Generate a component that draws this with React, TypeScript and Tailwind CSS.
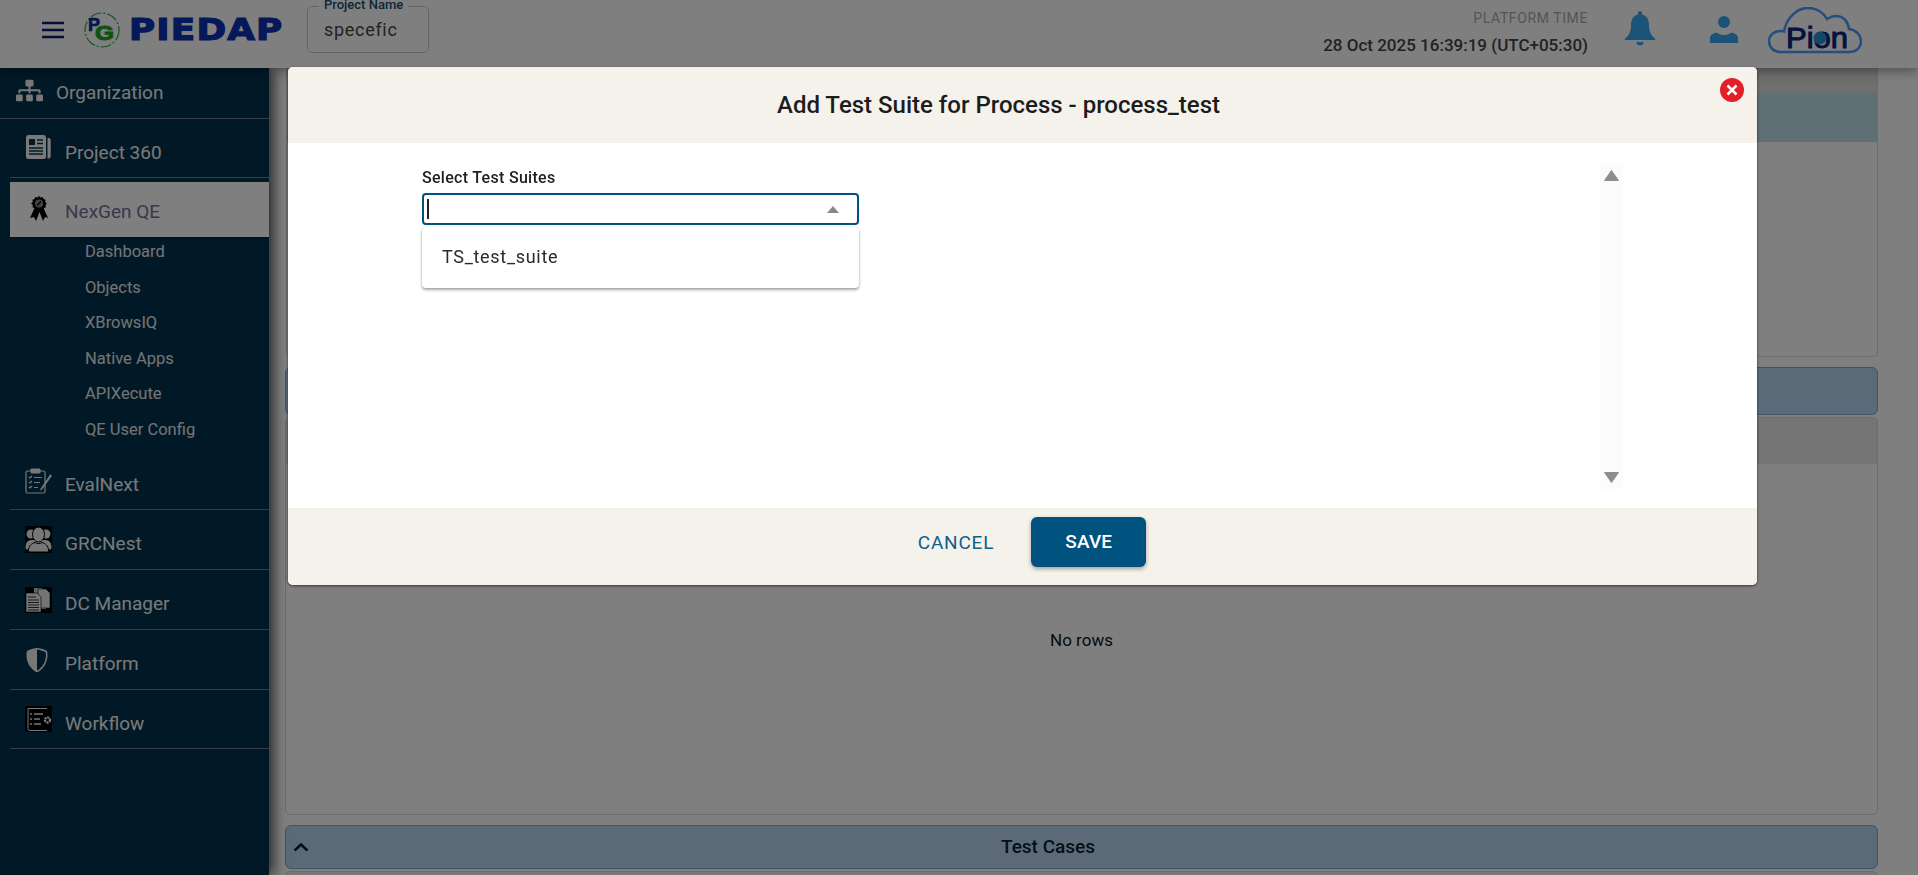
import React from "react";
import { FaSitemap } from "react-icons/fa";
import { BsShieldShaded } from "react-icons/bs";

const Ribbon = () => (
  <svg width="18" height="25" viewBox="0 0 18 25" className="block">
    <path d="M5 11 L0 22 L4 21 L6 25 L9.5 16 L13 25 L15 21 L18 22 L13 11Z" fill="#000" />
    <path d="M9 0l1.6 1.5 2.2-.5.7 2.1 2.1.7-.5 2.2L17 7.5l-1.5 1.6.5 2.2-2.1.7-.7 2.1-2.2-.5L9 15.2l-1.6-1.6-2.2.5-.7-2.1-2.1-.7.5-2.2L1 7.5l1.9-1.5-.5-2.2 2.1-.7.7-2.1 2.2.5z" fill="#000" />
    <circle cx="9" cy="7.6" r="4" fill="#888" />
    <path d="M7 9.5 L11 5.5" stroke="#000" strokeWidth="1.4" />
  </svg>
);

const Paper = () => (
  <svg width="25" height="25" viewBox="0 0 25 25" className="block">
    <rect x="0" y="0" width="20" height="24" rx="2.5" fill="#f4f4f4" />
    <path d="M21.5 3h1.2a2 2 0 0 1 2 2v16a2.5 2.5 0 0 1-2.5 2.5h-.7z" fill="#f4f4f4" />
    <rect x="3" y="4" width="6" height="6" fill="#03324d" />
    <path d="M11 5h6M11 8.500h6M3 13h14M3 16h14M3 19h14" stroke="#03324d" strokeWidth="1.500" />
  </svg>
);

const Clip = () => (
  <svg width="27" height="26" viewBox="0 0 27 26" className="block" fill="none" stroke="#f0f0f0" strokeWidth="1.200">
    <rect x="1" y="3" width="19" height="22" rx="1.500" />
    <rect x="6" y="1" width="9" height="4" rx="1" fill="#f0f0f0" />
    <path d="M4 9l1 1 2-2M4 14l1 1 2-2M4 19l1 1 2-2M9 9.500h8M9 14.500h6M9 19.500h4" />
    <path d="M25.500 6 L16 20 L14.500 23 L17.500 21 L26.800 8z" fill="#f0f0f0" stroke="none" />
  </svg>
);

const Users = () => (
  <div className="w-[27px] h-[27px] bg-black">
    <svg width="27" height="27" viewBox="0 0 27 27" fill="#efefef" className="block">
      <circle cx="6" cy="8" r="4.500" />
      <circle cx="21" cy="8" r="4.500" />
      <path d="M0.500 22c0-5 2-8 6-8h14c4 0 6 3 6 8 0 1-1 1.500-2 1.500H3c-1 0-2.500-.5-2.500-1.500z" />
      <ellipse cx="13.500" cy="8.500" rx="6" ry="7.500" stroke="#000" strokeWidth="1" />
      <path d="M5 26c-1 0-1.500-.5-1.500-1.500C3.500 20 7 17 10 16.500c2 1.500 5 1.500 7 0 3 .5 6.500 3.500 6.500 8 0 1-.5 1.500-1.500 1.500z" stroke="#000" strokeWidth="1" />
    </svg>
  </div>
);

const Docs = () => (
  <div className="w-[27px] h-[26px] bg-black">
    <svg width="27" height="26" viewBox="0 0 27 26" className="block">
      <path d="M9 1h8l4 4v17H9z" fill="#c8c8c8" />
      <path d="M13 2h8l4 4v15H13z" fill="#e8e8e8" stroke="#000" strokeWidth=".6" />
      <path d="M1 6h11l4 4v15H1z" fill="#f0f0f0" stroke="#000" strokeWidth=".6" />
      <path d="M3 10h8M3 13h11M3 15.500h11M3 18h11M3 20.500h11M3 23h11" stroke="#333" strokeWidth="1" />
    </svg>
  </div>
);

const Flow = () => (
  <div className="w-[27px] h-[26px] bg-black">
    <svg width="27" height="26" viewBox="0 0 27 26" className="block" fill="none" stroke="#eeeeee">
      <path d="M3 2.500h19M3 2.500v20a2 2 0 0 0 2 2h17" strokeWidth="1" />
      <path d="M5 8h2M9 8h9M5 13h2M9 13h6M5 18h2M9 18h7" strokeWidth="1.500" />
      <circle cx="22.500" cy="14" r="2.500" strokeWidth="2.500" strokeDasharray="2 0.800" />
    </svg>
  </div>
);

type Row = { label: string; icon: React.ReactNode; cls: string };

const lower: Row[] = [
  { label: "GRCNest", icon: <Users />, cls: "h-[60px]" },
  { label: "DC Manager", icon: <Docs />, cls: "h-[60px]" },
  { label: "Platform", icon: <BsShieldShaded size={24} color="#f0f0f0" />, cls: "h-[60px]" },
  { label: "Workflow", icon: <Flow />, cls: "h-[59px]" },
];

const subs = ["Dashboard", "Objects", "XBrowsIQ", "Native Apps", "APIXecute", "QE User Config"];

function Sidebar() {
  return (
    <aside className="w-[269px] shrink-0 bg-[#03324d] relative z-10 shadow-[5px_0_12px_rgba(0,0,0,0.65)] text-[19px] text-[#f2f2f2]">
      <div className="h-[51px] flex items-center pl-[16px] border-b border-[#66788f]">
        <FaSitemap size={27} color="#f0f0f0" className="mb-[5px]" />
        <span className="ml-[13px]">Organization</span>
      </div>
      <div className="ml-[10px] h-[59px] flex items-center pl-[16px] border-b border-[#66788f]">
        <span className="w-[39px] mb-[2px]"><Paper /></span>
        <span className="mt-[10px]">Project 360</span>
      </div>
      <div className="ml-[10px] mt-[4px] h-[55px] bg-white flex items-center pl-[20px] text-[#70709e] shadow-[0_1px_2px_rgba(0,0,0,0.3)]">
        <span className="w-[35px] mb-[2px]"><Ribbon /></span>
        <span className="mt-[6px]">NexGen QE</span>
      </div>
      <ul className="-mt-[3px] pl-[85px] text-[16.500px] text-[#e8e8e8]">
        {subs.map((s) => (
          <li key={s} className="h-[35.600px] pt-[1px] flex items-center">{s}</li>
        ))}
      </ul>
      <div className="ml-[10px] h-[62px] flex items-center pl-[15px] border-b border-[#66788f]">
        <span className="w-[40px] mb-[-5px]"><Clip /></span>
        <span className="mt-[15px]">EvalNext</span>
      </div>
      {lower.map((r) => (
        <div key={r.label} className={`ml-[10px] flex items-center pl-[15px] border-b border-[#66788f] ${r.cls}`}>
          <span className="w-[40px] mb-[-1px] flex justify-start">{r.icon}</span>
          <span className="mt-[11px]">{r.label}</span>
        </div>
      ))}
    </aside>
  );
}

function Header() {
  return (
    <header className="h-[68px] bg-white relative z-20 flex items-center shadow-[0_2px_12px_rgba(0,0,0,0.45)]">
      <svg width="24" height="18" viewBox="0 0 24 18" className="ml-[41px] mb-[9px] block">
        <path d="M1 2h22M1 9h22M1 16h22" stroke="#0a1a70" strokeWidth="2.400" />
      </svg>
      <svg width="38" height="38" viewBox="0 0 38 38" className="ml-[18px] mb-[8px] block">
        <circle cx="19" cy="19" r="17" fill="none" stroke="#2ea84a" strokeWidth="1.200" strokeDasharray="11 2 2 2" />
        <text x="5" y="20" fontFamily="'Liberation Sans', sans-serif" fontWeight="700" fontSize="18" fill="#0a2a9a" stroke="#0a2a9a" strokeWidth=".6">P</text>
        <text x="12" y="29" textLength="19" lengthAdjust="spacingAndGlyphs" fontFamily="'Liberation Sans', sans-serif" fontWeight="700" fontSize="20" fill="#1fa52a" stroke="#1fa52a" strokeWidth="1">G</text>
      </svg>
      <span className="ml-[8px] mb-[8px] w-[153px] origin-left scale-x-[1.19] font-['DejaVu_Sans',sans-serif] font-bold text-[30px] leading-[30px] tracking-[1px] text-[#0a32b4] [-webkit-text-stroke:1.2px_#0a32b4]">PIEDAP</span>
      <div className="ml-[25px] mb-[9px] relative w-[122px] h-[47px] mt-[-1px] border border-[#c8c8c8] rounded-[5px] flex items-center pl-[16px]">
        <span className="absolute left-[11px] -top-[9px] bg-white px-[5px] leading-[14px] text-[13px] font-medium text-[#14506f] font-['Roboto',sans-serif]">Project Name</span>
        <span className="text-[18px] tracking-[0.7px] text-[#444]">specefic</span>
      </div>
      <div className="ml-auto flex flex-col items-end mb-[5px] mr-[36px]">
        <span className="text-[14px] leading-[20px] tracking-[0.6px] text-[#aaaaaa]">PLATFORM TIME</span>
        <span className="text-[17px] leading-[20px] mt-[7px] font-medium text-[#444]">28 Oct 2025 16:39:19 (UTC+05:30)</span>
      </div>
      <svg width="32" height="38" viewBox="0 0 32 38" className="mb-[10px] block" fill="#36a8f0">
        <path d="M16 1c1.400 0 2 1 2 2v1.500c5 1.200 7 5.500 7 10.500 0 7 2 10 6 13.500 .6.600 .3 1.500-.8 1.500H1.800c-1.100 0-1.400-.9-.8-1.500C5 25 7 22 7 15c0-5 2-9.300 7-10.500V3c0-1 .6-2 2-2z" />
        <path d="M12.500 32h7a3.500 3.500 0 0 1-7 0z" />
      </svg>
      <svg width="28" height="28" viewBox="0 0 28 28" className="ml-[54px] mb-[10px] block" fill="#36a8f0">
        <circle cx="14" cy="7" r="6" />
        <path d="M0 28v-5c0-3 3-5 7-5.500 2 2 4.500 2.500 7 2.500s5-.5 7-2.500c4 .5 7 2.500 7 5.500v5z" />
      </svg>
      <svg width="94" height="47" viewBox="0 0 94 47" className="ml-[30px] mb-[8px] mr-[56px] block">
        <path d="M13 45C5 45 1 40 1 34c0-6 5-10 12-10 1 0 2 0 3 .5C18 12 28 1 40 1c9 0 16 5 19 11 3-2 6-3 9-3 7 0 12 5 13 13 7 1 12 6 12 12 0 7-5 11-12 11z" fill="none" stroke="#4a9cff" strokeWidth="2.500" />
        <text x="18" y="41" textLength="62" lengthAdjust="spacingAndGlyphs" fontFamily="'Liberation Sans', sans-serif" fontSize="29" fill="#0a2478" stroke="#0a2478" strokeWidth="1">Pion</text>
        <circle cx="52" cy="31" r="6.500" fill="#2f8fd0" />
      </svg>
    </header>
  );
}

function Background() {
  return (
    <main className="flex-1 min-w-0 pl-[16px] pr-[40px] flex flex-col font-['Roboto',sans-serif]">
      <section className="ml-[1px] h-[289px] shrink-0 border border-t-0 border-[#d6d6d6] rounded-b-[5px]">
        <div className="h-[25px] bg-[#dedede]" />
        <div className="h-[49px] bg-[#c0dcec]" />
      </section>
      <div className="mt-[10px] h-[48px] shrink-0 bg-[#b8d4f0] border border-[#7aa8d0] rounded-[6px]" />
      <section className="mt-[2px] h-[398px] shrink-0 border border-[#d6d6d6] rounded-[5px] flex flex-col">
        <div className="h-[46px] bg-[#e8e8e8] shrink-0" />
        <div className="flex-1 flex items-start justify-center pt-[164px] text-[17px] text-[#111]">No rows</div>
      </section>
      <div className="mt-[10px] h-[44px] shrink-0 bg-[#b8d4f0] border border-[#7aa8d0] rounded-[6px] flex items-center pl-[7px] pr-[74px]">
        <svg width="16" height="10" viewBox="0 0 16 10" className="block mb-[1px]"><path d="M1.500 8.500 L8 2.500 L14.500 8.500" fill="none" stroke="#08202e" strokeWidth="2.600" /></svg>
        <span className="flex-1 text-center text-[19px] font-medium text-[#08202e] pr-[16px] pt-[1px]">Test Cases</span>
      </div>
      <div className="mt-[2px] h-[20px] shrink-0 border border-[#d6d6d6] rounded-t-[5px] bg-[#eeeeee]" />
    </main>
  );
}

function Modal() {
  return (
    <div className="fixed inset-0 z-30 bg-black/50">
      <div className="absolute left-[288px] top-[67px] w-[1469px] h-[518px] rounded-[5px] overflow-hidden bg-white flex flex-col shadow-[0_1px_3px_rgba(0,0,0,0.6)] font-['Roboto',sans-serif]">
        <div className="h-[76px] bg-[#f5f2ec] shrink-0 relative flex items-center justify-center pr-[48px]">
          <h2 className="text-[24px] font-medium text-[#1c1c1c]">Add Test Suite for Process - process_test</h2>
          <button className="absolute left-[1432px] top-[11px] w-[24px] h-[24px] rounded-full bg-[#e32027] flex items-center justify-center">
            <svg width="14" height="14" viewBox="0 0 14 14"><path d="M2.500 2.500 L11.500 11.500 M11.500 2.500 L2.500 11.500" stroke="#fff" strokeWidth="2.500" /></svg>
          </button>
        </div>
        <div className="flex-1 min-h-0 flex justify-between pt-[20px] px-[134px]">
          <div className="w-[437px] relative">
            <label className="block text-[16px] leading-[28px] mt-[1px] font-medium tracking-[0.3px] text-[#1f1f1f]">Select Test Suites</label>
            <div className="mt-[1px] h-[32px] border-2 border-[#00527f] rounded-[4px] flex items-center pl-[3px] pr-[18px] justify-between">
              <span className="w-[2px] h-[20px] bg-[#222]" />
              <svg width="12" height="7" viewBox="0 0 12 7"><path d="M6 0 L12 7 H0Z" fill="#888" /></svg>
            </div>
            <div className="absolute left-0 top-[64px] w-[437px] h-[61px] rounded-[4px] bg-white shadow-[0_2px_3px_rgba(0,0,0,0.35),0_0_2px_rgba(0,0,0,0.12)] flex items-center pl-[20px] pb-[2px] text-[18px] tracking-[0.7px] text-[#2a2a2a]">TS_test_suite</div>
          </div>
          <div className="w-[23px] h-[326px] bg-[#fbfbfb] flex flex-col items-center justify-between pt-[7px] pb-[6px]">
            <svg width="15" height="11" viewBox="0 0 15 11"><path d="M7.500 0.500 L14.500 10.500 H0.500Z" fill="#8d8d8d" stroke="#8d8d8d" strokeLinejoin="round" /></svg>
            <svg width="15" height="11" viewBox="0 0 15 11"><path d="M7.500 10.500 L14.500 0.500 H0.500Z" fill="#8d8d8d" stroke="#8d8d8d" strokeLinejoin="round" /></svg>
          </div>
        </div>
        <div className="h-[77px] shrink-0 bg-[#f5f2ec] flex items-start justify-center pl-[19px] pt-[9px]">
          <button className="h-[50px] text-[19px] tracking-[0.8px] text-[#0f5f8e] mr-[37px] mt-[1px]">CANCEL</button>
          <button className="w-[115px] h-[50px] rounded-[6px] bg-[#00527f] text-white text-[19px] font-medium tracking-[0.2px] shadow-[0_2px_4px_rgba(0,0,0,0.35)]">SAVE</button>
        </div>
      </div>
    </div>
  );
}

export default function App() {
  return (
    <div className="h-screen overflow-hidden bg-white flex flex-col font-['Roboto',sans-serif]">
      <Header />
      <div className="flex flex-1 min-h-0">
        <Sidebar />
        <Background />
      </div>
      <Modal />
    </div>
  );
}
